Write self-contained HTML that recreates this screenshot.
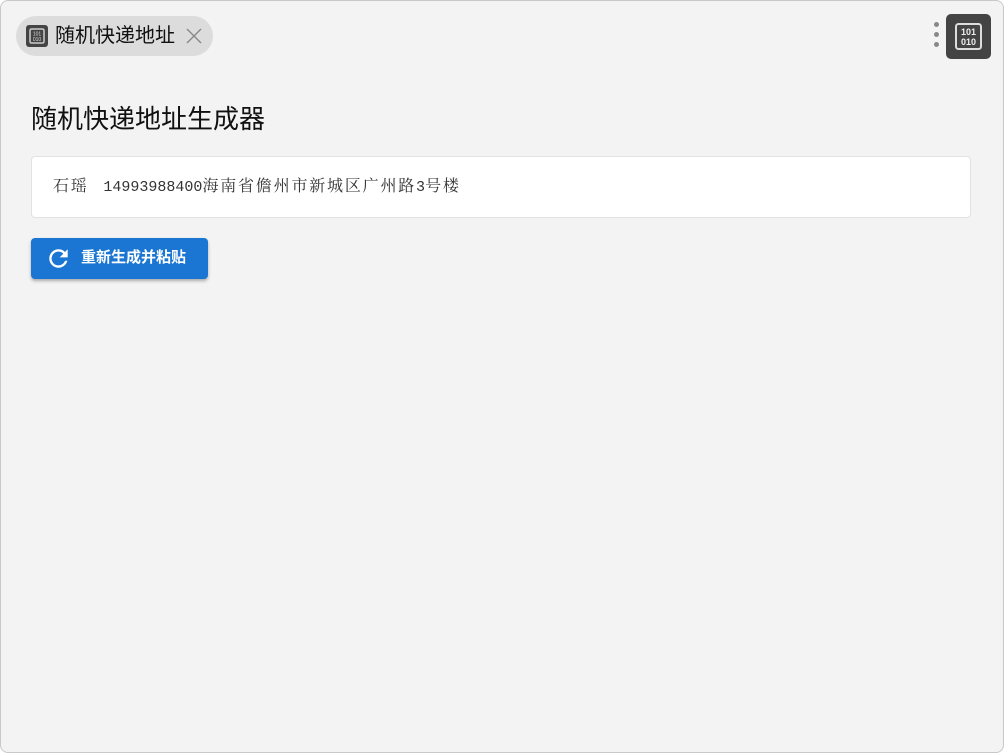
<!DOCTYPE html>
<html><head><meta charset="utf-8"><style>
html,body{margin:0;padding:0;width:1004px;height:753px;overflow:hidden;background:#fff;}
.win{position:absolute;left:0;top:0;width:1004px;height:753px;box-sizing:border-box;border:1px solid #c8c8c8;border-radius:8px;background:#f3f3f3;overflow:hidden;font-family:"Liberation Sans","Noto Sans CJK SC",sans-serif;}
.in{position:absolute;left:-1px;top:-1px;width:1004px;height:753px;}
.tab{position:absolute;left:16px;top:16px;width:197px;height:40px;border-radius:20px;background:#dcdcdc;}
.tab .ic{position:absolute;left:10px;top:9px;width:22px;height:22px;background:#444;border-radius:3px;}
.tab .t{position:absolute;left:39px;top:8px;font-size:20px;color:#111;line-height:24px;}
.h1{position:absolute;left:31px;top:103px;font-size:26px;color:#111;line-height:32px;}
.box{position:absolute;left:31px;top:156px;width:938px;height:60px;background:#fff;border:1px solid #e2e2e2;border-radius:4px;}
.box span.a{position:absolute;left:21px;top:19px;font-size:16px;color:#333;font-family:"Liberation Serif","Noto Serif CJK SC",serif;line-height:22px;white-space:pre;letter-spacing:1.8px;}
.m{font-family:"Liberation Mono",monospace;font-size:15px;letter-spacing:0;}
.btn{position:absolute;left:31px;top:238px;width:177px;height:41px;background:#1a76d2;border-radius:4px;box-shadow:0 2px 3px rgba(0,0,0,.3);}
.btn span{position:absolute;left:50px;top:10px;color:#fff;font-size:15px;font-weight:bold;line-height:20px;}
.big{position:absolute;left:946px;top:14px;width:45px;height:45px;background:#444;border-radius:5px;}
.dot{position:absolute;left:934px;width:5px;height:5px;border-radius:50%;background:#888;}
</style></head><body><div class="win"><div class="in">
<div class="tab"><div class="ic"><svg width="22" height="22" viewBox="0 0 22 22"><rect x="4" y="4" width="14" height="14" rx="1.5" fill="none" stroke="#ccc" stroke-width="1.5"/><text x="11" y="10.5" font-size="5" fill="#ddd" text-anchor="middle" font-family="Liberation Sans">101</text><text x="11" y="16" font-size="5" fill="#ddd" text-anchor="middle" font-family="Liberation Sans">010</text></svg></div><div class="t">随机快递地址</div>
<svg style="position:absolute;left:170px;top:12px" width="16" height="16" viewBox="0 0 16 16"><path d="M1 1L15 15M15 1L1 15" stroke="#888" stroke-width="1.4"/></svg></div>
<div class="dot" style="top:22px"></div><div class="dot" style="top:32px"></div><div class="dot" style="top:42px"></div>
<div class="big"><svg width="45" height="45" viewBox="0 0 45 45"><rect x="10" y="10" width="25" height="25" rx="2.5" fill="none" stroke="#ddd" stroke-width="2"/><text x="22.5" y="21" font-size="9" font-weight="bold" fill="#eee" text-anchor="middle" font-family="Liberation Sans">101</text><text x="22.5" y="31" font-size="9" font-weight="bold" fill="#eee" text-anchor="middle" font-family="Liberation Sans">010</text></svg></div>
<div class="h1">随机快递地址生成器</div>
<div class="box"><span class="a">石瑶 <span class="m"> 14993988400</span>海南省儋州市新城区广州路<span class="m">3</span>号楼</span></div>
<div class="btn"><svg style="position:absolute;left:16px;top:9px" width="23" height="23" viewBox="2 2 20 20"><path fill="#fff" d="M17.65 6.35A7.96 7.96 0 0 0 12 4a8 8 0 1 0 7.73 10h-2.08A6 6 0 1 1 12 6c1.66 0 3.14.69 4.22 1.78L13 11h7V4l-2.35 2.35z"/></svg><span>重新生成并粘贴</span></div>
</div></div></body></html>
